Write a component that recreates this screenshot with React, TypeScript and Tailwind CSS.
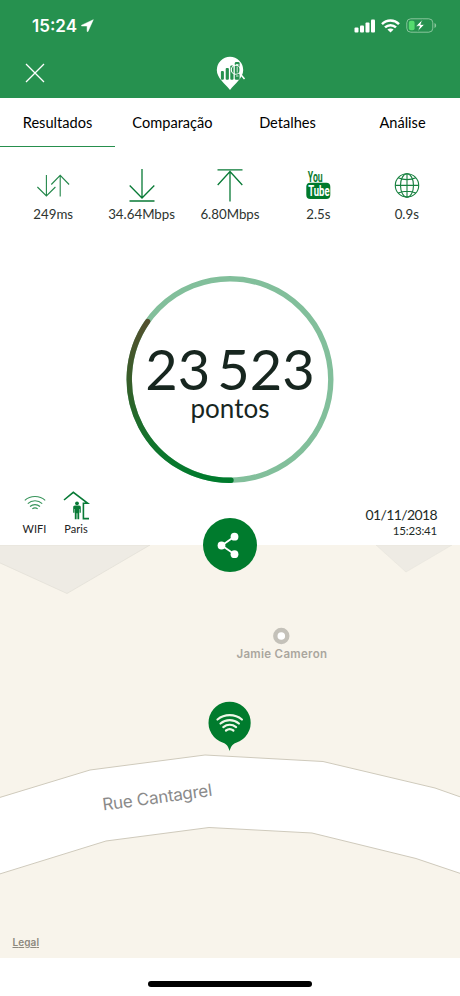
import type { ReactNode } from "react";
import clsx from "clsx";

const tabs = ["Resultados", "Comparação", "Detalhes", "Análise"];

function LatencyIcon() {
  return (
    <svg className="size-9" viewBox="0 0 36 36" fill="none" stroke="#23874a" strokeWidth="1.1">
      <path d="M11.4 8v21M2.4 20l9 9 9-9M25.2 29.500V8.200M16.300 17.500l8.900-9.200 8.900 9.200" />
    </svg>
  );
}

function DownloadIcon() {
  return (
    <svg className="size-9" viewBox="0 0 36 36" fill="none" stroke="#087a36" strokeWidth="1.3">
      <path d="M18 2v29M5.7 18.5L18 31l12.3-12.5M5.5 34h25" />
    </svg>
  );
}

function UploadIcon() {
  return (
    <svg className="size-9" viewBox="0 0 36 36" fill="none" stroke="#087a36" strokeWidth="1.3">
      <path d="M18 34.500V4.500M5.700 18L18 4.500 30.300 18M5.500 2.900h25" />
    </svg>
  );
}

function YouTubeIcon() {
  return (
    <svg className="size-9 overflow-visible font-['Roboto',sans-serif] font-bold" viewBox="0 0 36 36">
      <text transform="translate(7.8 14.6) scale(.62 1)" fill="#087a2d" fontSize="14">You</text>
      <rect x="6.3" y="15.8" width="24" height="16.2" rx="4" fill="#007a2b" />
      <text transform="translate(8.2 29) scale(.68 1)" fill="#fff" fontSize="14">Tube</text>
    </svg>
  );
}

function GlobeIcon() {
  return (
    <svg className="size-9" viewBox="0 0 36 36" fill="none" stroke="#16803f" strokeWidth="1.1">
      <circle cx="18" cy="18.4" r="11.7" />
      <ellipse cx="18" cy="18.4" rx="6.5" ry="11.7" />
      <path d="M18 6.7v23.4M6.3 18.4h23.4M9.2 10.8c5 2.4 12.6 2.4 17.6 0M9.2 26c5-2.4 12.6-2.4 17.6 0" />
    </svg>
  );
}

const metrics: { value: string; icon: ReactNode }[] = [
  { value: "249ms", icon: <LatencyIcon /> },
  { value: "34.64Mbps", icon: <DownloadIcon /> },
  { value: "6.80Mbps", icon: <UploadIcon /> },
  { value: "2.5s", icon: <YouTubeIcon /> },
  { value: "0.9s", icon: <GlobeIcon /> },
];

function StatusBar() {
  return (
    <div className="flex h-[51px] items-center pl-8 pr-[23px] text-white">
      <span className="mt-px font-['Inter',sans-serif] text-[17px] font-semibold leading-none">15:24</span>
      <svg className="ml-1 size-[13px]" viewBox="0 0 13 13" fill="#fff">
        <path d="M12.3.7L.6 6.2c-.5.3-.4.8.2.8h5.3v5.2c0 .7.6.8.9.2z" stroke="#fff" strokeWidth=".5" />
      </svg>
      <div className="ml-auto flex items-center">
        <svg className="h-[14px] w-[22px]" viewBox="0 0 22 14" fill="#fff">
          <rect x="0.5" y="8.5" width="4" height="5" rx="1" />
          <rect x="6" y="6.5" width="4" height="7" rx="1" />
          <rect x="11.5" y="3.5" width="4" height="10" rx="1" />
          <rect x="17" y="0.5" width="4" height="13" rx="1" />
        </svg>
        <svg className="ml-[5px] h-[14px] w-[19px]" viewBox="0 0 19 14" fill="none" stroke="#fff" strokeWidth="2.5">
          <path d="M1 5.1c4.8-4.7 12.2-4.7 17 0M4 8.4c3.1-3 7.9-3 11 0" />
          <path d="M9.5 13.6L6.4 10.6c1.7-1.6 4.5-1.6 6.2 0z" fill="#fff" stroke="none" />
        </svg>
        <svg className="ml-[6px] h-[15px] w-[31px]" viewBox="0 0 31 15">
          <rect x=".8" y=".8" width="26" height="13.4" rx="4" fill="none" stroke="#8ac69d" />
          <path d="M28.5 5v5c2.2-.8 2.2-4.2 0-5z" fill="#8ac69d" />
          <rect x="2.8" y="2.8" width="5.8" height="9.4" rx="2" fill="#55db6e" />
          <path d="M16.5 1.5L9.8 8.2h3.8L11.7 13.5l6.8-7h-3.7z" fill="#fff" stroke="#26914f" strokeWidth=".7" />
        </svg>
      </div>
    </div>
  );
}

function Logo() {
  return (
    <svg className="h-[35px] w-[30px]" viewBox="0 0 30 35">
      <path d="M14 34C9 27.5.8 22 .8 14A13.2 13.2 0 0 1 27.2 14C27.2 22 19 27.5 14 34z" fill="#fff" />
      <g fill="#26914f">
        <rect x="4.9" y="15" width="3" height="8.8" rx="1" />
        <rect x="9.7" y="12" width="3.2" height="11.8" rx="1" />
        <rect x="14.3" y="9.5" width="3.2" height="14.3" rx="1" />
        <rect x="18.8" y="6" width="4.8" height="17.8" rx="1.2" />
      </g>
      <path d="M23.5 17l5 6" stroke="#fff" strokeWidth="1.5" />
      <circle cx="19.8" cy="13.8" r="4.5" fill="none" stroke="#fff" strokeWidth="1.1" />
      <path d="M21.2 10.5v6M20 8.5h2.5M20 20h2.5" fill="none" stroke="#e7f4eb" strokeWidth=".9" />
    </svg>
  );
}

function ScoreRing() {
  return (
    <div className="relative size-[208px]">
      <svg className="size-full" viewBox="0 0 208 208" fill="none" strokeWidth="5.4">
        <defs>
          <linearGradient id="score" x1="0" y1="45" x2="0" y2="205" gradientUnits="userSpaceOnUse">
            <stop offset="0" stopColor="#54502f" />
            <stop offset=".4" stopColor="#365e29" />
            <stop offset=".75" stopColor="#14732c" />
            <stop offset="1" stopColor="#007b2d" />
          </linearGradient>
        </defs>
        <circle cx="104" cy="104.5" r="100.8" stroke="#82bf9b" />
        <path d="M105 205.3A100.8 100.8 0 0 1 21.6 46.5" stroke="url(#score)" strokeLinecap="round" />
      </svg>
      <div className="absolute inset-0 flex flex-col items-center pt-[66px] text-[#17261f]">
        <span className="whitespace-nowrap text-[56px] leading-[56px]">23&#8201;523</span>
        <span className="-mt-[2px] text-[26px] leading-[26px]">pontos</span>
      </div>
    </div>
  );
}

function PlaceIcons() {
  return (
    <div className="flex text-[11px] leading-[14px] text-[#222]">
      <div className="flex w-[41px] flex-col items-center">
        <svg className="h-8 w-7" viewBox="0 0 28 32" fill="none" stroke="#37945a" strokeWidth="1.1">
          <path d="M3.8 10.4c5.5-5.2 14.9-5.2 20.4 0M6.8 13.6c4-3.9 10.4-3.9 14.4 0M9 16.5c2.8-2.5 7.2-2.5 10 0M11.3 18.9c1.6-1.2 3.8-1.2 5.4 0" />
        </svg>
        <span>WIFI</span>
      </div>
      <div className="flex w-[42px] flex-col items-center">
        <svg className="h-8 w-7" viewBox="0 0 28 32">
          <path d="M2 10L11.3 2.3 25.8 13.3h-4.4v15.3H27" fill="none" stroke="#087a36" strokeWidth="1.6" />
          <circle cx="15" cy="13.3" r="1.9" fill="#087a36" />
          <path d="M13 15.6h4c1.2 0 1.8.7 1.8 1.8v5.4h-1.2V19h-.4v10.3h-1.8v-6h-.8v6h-1.8V19h-.4v3.8h-1.2v-5.4c0-1.1.6-1.8 1.8-1.8z" fill="#087a36" />
        </svg>
        <span>Paris</span>
      </div>
    </div>
  );
}

function ShareButton() {
  return (
    <button type="button" aria-label="Partilhar" className="absolute -top-[27px] left-[203px] flex size-[54px] items-center justify-center rounded-full bg-[#007b2d]">
      <svg className="size-7" viewBox="0 0 28 28" fill="#fff">
        <path d="M18.5 5.5L5.8 14.5l12.7 8.8" fill="none" stroke="#fff" strokeWidth="1.8" />
        <circle cx="5.5" cy="14.5" r="3.9" />
        <circle cx="18.5" cy="5.7" r="3.9" />
        <circle cx="18.5" cy="23.2" r="3.9" />
      </svg>
    </button>
  );
}

function MapView() {
  return (
    <div className="relative h-[413px] bg-[#f8f4eb]">
      <svg className="block h-full w-full font-['Inter',sans-serif]" viewBox="0 0 460 413">
        <path d="M-2 17L67 48.5 150 0H-2z" fill="#eeebe4" stroke="#e1ded6" strokeWidth=".7" />
        <path d="M376 0L406 27 452 0z" fill="#eeebe4" stroke="#e5e2da" strokeWidth=".5" />
        <path
          d="M-2 253L90 225 205 210 323 216.5 435 243 462 252.5V329L416 313.5 312 288 209 282.5 106 296-2 329.5z"
          fill="#fff"
          stroke="#cfcabc"
        />
        <path id="street" d="M103.5 265.5Q158 258.5 218 250" fill="none" />
        <text fill="#8a8a8a" fontSize="17">
          <textPath href="#street" textLength="110.5">Rue Cantagrel</textPath>
        </text>
        <circle cx="281.3" cy="91" r="6" fill="#fff" stroke="#c4c1b9" strokeWidth="4.4" />
        <text x="236.5" y="113" fill="#aaa69e" fontSize="11.5" fontWeight="600" textLength="90.5">Jamie Cameron</text>
        <path d="M229.6 156.8a21 21 0 0 1 6.5 41c-3.7 1.3-4.8 3.4-6.5 8.2-1.7-4.8-2.8-6.9-6.5-8.2a21 21 0 0 1 6.5-41z" fill="#007b2d" />
        <g fill="none" stroke="#eef8e8" strokeWidth="2.2" strokeLinecap="round">
          <path d="M217.5 174.5c7-5.8 17.4-5.8 24.4 0M220.5 178.5c5.3-4.5 13.1-4.5 18.4 0M223.3 182.1c3.8-3 9-3 12.8 0M226 185.5c2.2-1.6 5.2-1.6 7.4 0" />
        </g>
        <text x="12.5" y="401" fill="#8d897e" fontSize="10" fontWeight="600" textLength="26.5" textDecoration="underline">Legal</text>
      </svg>
      <ShareButton />
    </div>
  );
}

export default function App() {
  return (
    <main className="h-[996px] w-[460px] overflow-hidden bg-white font-['Lato',sans-serif]">
      <header className="h-[98px] bg-[#26914f]">
        <StatusBar />
        <div className="flex h-[44px] items-center pl-[25px]">
          <button type="button" aria-label="Fechar" className="size-5">
            <svg className="size-5" viewBox="0 0 20 20" fill="none" stroke="#fff" strokeWidth="1.3">
              <path d="M1 1l18 18M19 1L1 19" />
            </svg>
          </button>
          <div className="ml-[171px]">
            <Logo />
          </div>
        </div>
      </header>

      <nav className="grid h-[49px] grid-cols-4 text-[14.6px] text-black">
        {tabs.map((tab, i) => (
          <button key={tab} type="button" className={clsx("border-b pt-0.5", i === 0 ? "border-[#268f4d]" : "border-transparent")}>
            {tab}
          </button>
        ))}
      </nav>

      <section className="grid grid-cols-5 px-[9px] pt-5">
        {metrics.map((m) => (
          <div key={m.value} className="flex flex-col items-center">
            {m.icon}
            <span className="mt-[2px] mb-px text-[13.3px] leading-[18px] text-[#2d3430]">{m.value}</span>
          </div>
        ))}
      </section>

      <div className="flex justify-center pt-[51px]">
        <ScoreRing />
      </div>

      <div className="flex h-[62px] items-start justify-between pl-[14px] pr-[23px] pt-[7px]">
        <PlaceIcons />
        <div className="flex flex-col items-end pt-[17px] text-[#222b26]">
          <span className="text-[14px] leading-4 tracking-[-0.6px]">01/11/2018</span>
          <span className="text-[11.5px] leading-[15px] tracking-[-0.2px]">15:23:41</span>
        </div>
      </div>

      <MapView />

      <footer className="flex justify-center pt-[23px]">
        <div className="h-[6px] w-[164px] rounded-full bg-black" />
      </footer>
    </main>
  );
}
